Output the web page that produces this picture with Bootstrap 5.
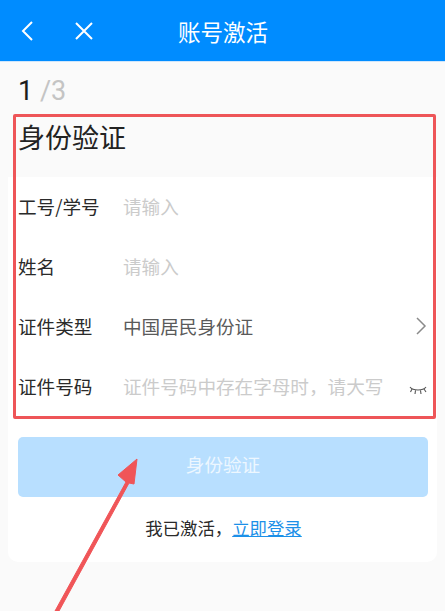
<!DOCTYPE html>
<html lang="zh">
<head>
<meta charset="utf-8">
<link href="https://cdn.jsdelivr.net/npm/bootstrap@5.3.0/dist/css/bootstrap.min.css" rel="stylesheet">
<style>
html,body{height:611px;overflow:hidden}
body{background:#fafafa;font-family:"Noto Sans CJK SC","Liberation Sans",sans-serif;color:#222;position:relative}
.app-bar{height:62px;background:#008cff;color:#fff;position:relative;padding:0 0 0 20px;gap:40px;border-bottom:1px solid #cfe6fb}
.app-title{position:absolute;left:0;right:0;text-align:center;font-size:22.5px;line-height:62px;margin:0;font-weight:400;padding-left:1px}
.step-line{height:52px;padding:13px 0 0 18px;font-family:"Roboto",sans-serif;font-size:27px;line-height:32px;color:#1c1c1c}
.step-line span{color:#c4c4c4}
.sect-head{height:63px;padding-left:18px;font-size:27px;line-height:46px;color:#222;font-weight:400;margin:0}
.form-sheet{margin:0 8px;width:429px;height:385px;background:#fff;border-radius:0 0 10px 10px;padding:0 10px 0 10px}
.field-row{height:60px;font-size:18.6px;padding-bottom:2px}
.field-label{width:105px;flex:none;color:#2a2a2a}
.field-val{color:#5a5a5a}
.field-hint{color:#cbcbcb}
.act-btn{width:410px;height:60px;margin:20px 0 0 0;padding-bottom:8px;background:#b8dfff;border:0;color:#edf7ff;font-size:18.6px;border-radius:5px}
.login-line{margin-top:18px;padding-left:2px;font-size:17.4px;line-height:26px;color:#2a2a2a;text-align:center}
.login-line a{color:#1c90e8}
.mark-box{position:absolute;left:13px;top:114px;width:423px;height:305px;border:3px solid #ee5558;border-radius:2px;pointer-events:none}
.mark-arrow{position:absolute;left:0;top:0;pointer-events:none}
.eye-ic{margin-top:8px}
</style>
</head>
<body>
<header class="app-bar d-flex align-items-center">
  <svg width="14" height="22" viewBox="0 0 14 22" fill="none" stroke="#fff" stroke-width="2"><path d="M12 2 3 11l9 9"/></svg>
  <svg width="20" height="20" viewBox="0 0 20 20" fill="none" stroke="#fff" stroke-width="2"><path d="m2 2 16 16M18 2 2 18"/></svg>
  <h1 class="app-title">账号激活</h1>
</header>
<div class="step-line">1 <span>/3</span></div>
<h2 class="sect-head">身份验证</h2>
<main class="form-sheet">
  <div class="field-row d-flex align-items-center"><div class="field-label">工号/学号</div><div class="field-hint">请输入</div></div>
  <div class="field-row d-flex align-items-center"><div class="field-label">姓名</div><div class="field-hint">请输入</div></div>
  <div class="field-row d-flex align-items-center"><div class="field-label">证件类型</div><div class="field-val flex-grow-1">中国居民身份证</div>
    <svg width="12" height="20" viewBox="0 0 12 20" fill="none" stroke="#8a8a8a" stroke-width="1.500"><path d="m2 2 8 8-8 8"/></svg></div>
  <div class="field-row d-flex align-items-center"><div class="field-label">证件号码</div><div class="field-hint flex-grow-1 text-nowrap">证件号码中存在字母时，请大写</div>
    <svg class="eye-ic" width="18" height="10" viewBox="0 0 18 10" fill="none" stroke="#555" stroke-width="1.100"><path d="M1 2c3 4 13 4 16 0M3 4 1.500 7M6.500 5.500 6 9M11.500 5.500 12 9M15 4l2 3"/></svg></div>
  <button class="act-btn d-block" type="button">身份验证</button>
  <p class="login-line mb-0">我已激活，<a href="#">立即登录</a></p>
</main>
<div class="mark-box"></div>
<svg class="mark-arrow" width="445" height="611" viewBox="0 0 445 611"><path d="M55 611 126 482 118 475 137 459 134 484 129 483 59 611Z" fill="#f05558" stroke="#f05558" stroke-linejoin="round"/></svg>
<script src="https://cdn.jsdelivr.net/npm/bootstrap@5.3.0/dist/js/bootstrap.bundle.min.js"></script>
</body>
</html>
